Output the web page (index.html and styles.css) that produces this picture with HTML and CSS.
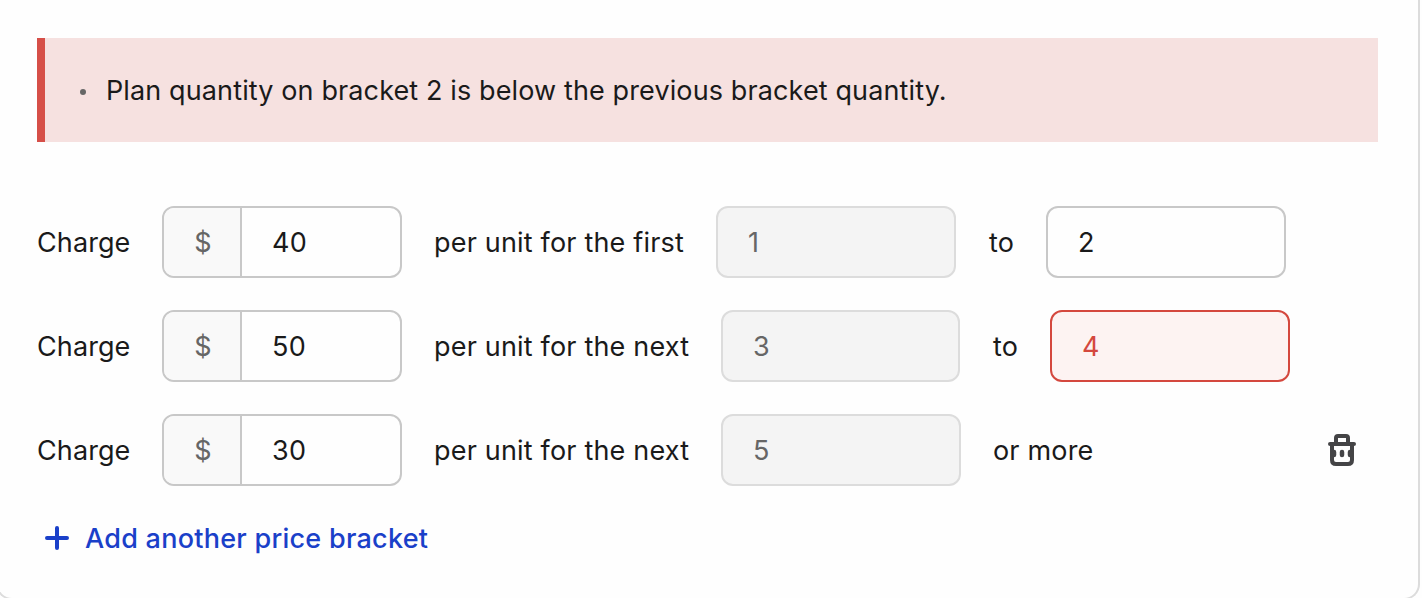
FILE: index.html
```html
<!DOCTYPE html>
<html lang="en">
<head>
<meta charset="utf-8">
<title>Price brackets</title>
<link rel="stylesheet" href="styles.css">
</head>
<body>
<main class="card">
  <div class="alert"><ul class="alert-list"><li><span class="alert-text">Plan quantity on bracket 2 is below the previous bracket quantity.</span></li></ul></div>
  <div class="rows">
    <div class="row">
      <span class="label charge">Charge</span>
      <div class="field money"><span class="prefix">$</span><span class="value">40</span></div>
      <span class="label per first">per unit for the first</span>
      <div class="field disabled">1</div>
      <span class="label to">to</span>
      <div class="field">2</div>
    </div>
    <div class="row">
      <span class="label charge">Charge</span>
      <div class="field money"><span class="prefix">$</span><span class="value">50</span></div>
      <span class="label per">per unit for the next</span>
      <div class="field disabled narrow">3</div>
      <span class="label to">to</span>
      <div class="field error">4</div>
    </div>
    <div class="row">
      <span class="label charge">Charge</span>
      <div class="field money"><span class="prefix">$</span><span class="value">30</span></div>
      <span class="label per">per unit for the next</span>
      <div class="field disabled">5</div>
      <span class="label more">or more</span>
      <svg class="trash" viewBox="0 0 28 34" fill="none" stroke="#444446" stroke-width="4" stroke-linecap="round" stroke-linejoin="round"><path d="M2 11h24M8 10V5q0-2 2-2h8q2 0 2 2v5M4 11v16q0 4 4 4h12q4 0 4-4V11"/><path d="M6 19v3M14 19v3M22 19v3" stroke-width="4.500"/></svg>
    </div>
  </div>
  <div class="add"><svg class="plus" viewBox="0 0 24 24"><path d="M12 2v20M2 12h20" stroke="#1a40c9" stroke-width="4" stroke-linecap="round"/></svg><span class="add-text">Add another price bracket</span></div>
</main>
</body>
</html>
```
FILE: styles.css
```css
* { box-sizing: border-box; }
body { margin: 0; background: #fefefe; font: 27px/36px Inter, "Liberation Sans", sans-serif; color: #1a1a1a; overflow: hidden; }
.card { width: 1424px; height: 600px; margin-left: -4px; padding: 38px 40px 0 39px; border: solid #dcdcdc; border-width: 0 2px 2px; border-radius: 0 0 16px 16px; }
.alert { height: 104px; width: 1341px; background: #f6e1e0; border-left: 8px solid #d64f48; display: flex; align-items: center; }
.alert-list { margin: 0; padding: 2px 0 0 35px; list-style: none; }
.alert-list li { display: flex; align-items: center; gap: 20px; }
.alert-list li::before { content: ""; width: 6px; height: 6px; margin-top: 2px; border-radius: 3px; background: #666; }
.alert-text { letter-spacing: 0.12px; }
.rows { margin-top: 64px; display: grid; gap: 32px; }
.row { display: flex; align-items: center; gap: 32px; height: 72px; }
.label { white-space: nowrap; flex: none; padding-top: 2px; letter-spacing: 0.18px; }
.charge { width: 93px; letter-spacing: 0.1px; }
.per { width: 255px; }
.first { width: 250px; }
.to { width: 26px; padding-left: 1px; }
.field { width: 240px; height: 72px; flex: none; border: 2px solid #c8c8c8; border-radius: 12px; padding: 2px 30px 0; display: flex; align-items: center; }
.money { padding: 0; overflow: hidden; }
.prefix { width: 78px; height: 68px; padding: 2px 0 0 2px; border-right: 2px solid #c8c8c8; background: #f9f9f9; color: #666; display: grid; place-items: center; }
.value { padding: 2px 0 0 30px; letter-spacing: 0.3px; }
.disabled { background: #f4f4f4; border-color: #dcdcdc; color: #666; }
.narrow { width: 239px; }
.error { background: #fdf3f2; border-color: #d4483e; color: #d4483e; }
.trash { width: 28px; height: 34px; margin-left: auto; margin-right: 22px; }
.add { display: flex; align-items: center; gap: 16px; margin: 34px 0 0 8px; color: #1a40c9; font-weight: 500; }
.add-text { padding-top: 2px; margin-bottom: -1px; margin-top: -1px; letter-spacing: 0.26px; }
.plus { width: 24px; height: 24px; }
```
